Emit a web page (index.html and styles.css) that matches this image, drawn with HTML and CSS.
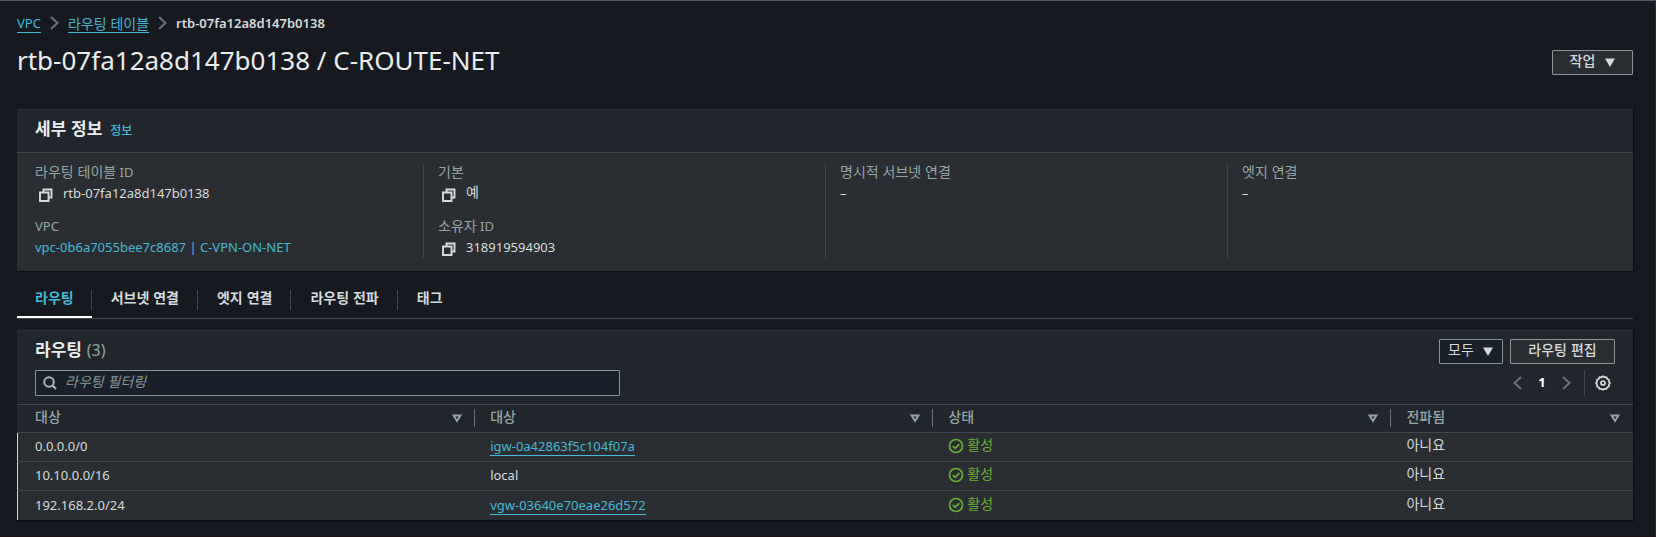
FILE: index.html
```html
<!DOCTYPE html>
<html lang="ko">
<head>
<meta charset="utf-8">
<meta name="viewport" content="width=device-width, initial-scale=1">
<title>rtb-07fa12a8d147b0138 / C-ROUTE-NET</title>
<link rel="stylesheet" href="styles.css">
</head>
<body>
<svg class="sprite" aria-hidden="true">
  <symbol id="chevron" viewBox="0 0 9 14"><path d="M1 1l6.500 6L1 13" fill="none" stroke="currentColor" stroke-width="2"/></symbol>
  <symbol id="caret" viewBox="0 0 10 9"><path d="M0 .5h10L5 9z" fill="currentColor"/></symbol>
  <symbol id="sort" viewBox="0 0 10 9"><path d="M1.600 1.500h6.800L5 7z" fill="none" stroke="currentColor" stroke-width="1.900"/></symbol>
  <symbol id="copy" viewBox="0 0 14 14"><path d="M1 4.500h8.500v8.500H1zM4.500 4.500V1.500H12.500v8H10" fill="none" stroke="currentColor" stroke-width="1.900"/></symbol>
  <symbol id="ok" viewBox="0 0 16 16"><circle cx="8" cy="8" r="6.500" fill="none" stroke="currentColor" stroke-width="1.700"/><path d="M4.800 8l2.300 2.300 4.200-4.200" fill="none" stroke="currentColor" stroke-width="1.700"/></symbol>
  <symbol id="search" viewBox="0 0 14 14"><circle cx="6" cy="6" r="4.800" fill="none" stroke="currentColor" stroke-width="2"/><path d="M9.500 9.500l3.500 3.500" stroke="currentColor" stroke-width="2"/></symbol>
  <symbol id="gear" viewBox="0 0 16 16"><path d="M8 1.200l1.600 1.100 1.900-.1.800 1.700 1.700.9-.1 1.900L15 8l-1.100 1.500.1 1.900-1.700.8-.8 1.700-1.900-.1L8 14.900l-1.600-1.100-1.900.1-.8-1.700-1.700-.8.1-1.900L1 8l1.100-1.400L2 4.800l1.700-.9.800-1.700 1.900.1z" fill="none" stroke="currentColor" stroke-width="1.700" stroke-linejoin="round"/><circle cx="8" cy="8" r="2" fill="none" stroke="currentColor" stroke-width="1.700"/></symbol>
</svg>
<div class="page">
  <nav class="crumbs" aria-label="breadcrumb">
    <a class="link line" href="#">VPC</a>
    <svg class="chev"><use href="#chevron"/></svg>
    <a class="link line ko" href="#">라우팅 테이블</a>
    <svg class="chev"><use href="#chevron"/></svg>
    <span class="current">rtb-07fa12a8d147b0138</span>
  </nav>
  <header class="title-row">
    <h1>rtb-07fa12a8d147b0138 / C-ROUTE-NET</h1>
    <button class="btn actions" type="button"><span>작업</span><svg class="caret"><use href="#caret"/></svg></button>
  </header>

  <section class="panel details">
    <div class="panel-head"><h2>세부 정보</h2><a class="link info" href="#">정보</a></div>
    <div class="columns">
      <dl>
        <dt><span class="ko">라우팅 테이블</span> ID</dt>
        <dd><button class="copy" type="button" aria-label="복사"><svg><use href="#copy"/></svg></button>rtb-07fa12a8d147b0138</dd>
        <dt>VPC</dt>
        <dd><a class="link" href="#">vpc-0b6a7055bee7c8687 | C-VPN-ON-NET</a></dd>
      </dl>
      <dl>
        <dt><span class="ko">기본</span></dt>
        <dd><button class="copy" type="button" aria-label="복사"><svg><use href="#copy"/></svg></button><span class="ko raised">예</span></dd>
        <dt><span class="ko">소유자</span> ID</dt>
        <dd><button class="copy" type="button" aria-label="복사"><svg><use href="#copy"/></svg></button>318919594903</dd>
      </dl>
      <dl>
        <dt><span class="ko">명시적 서브넷 연결</span></dt>
        <dd>–</dd>
      </dl>
      <dl>
        <dt><span class="ko">엣지 연결</span></dt>
        <dd>–</dd>
      </dl>
    </div>
  </section>

  <div class="tabs" role="tablist">
    <button class="tab active" type="button" role="tab" aria-selected="true">라우팅</button>
    <button class="tab" type="button" role="tab">서브넷 연결</button>
    <button class="tab" type="button" role="tab">엣지 연결</button>
    <button class="tab" type="button" role="tab">라우팅 전파</button>
    <button class="tab" type="button" role="tab">태그</button>
  </div>

  <section class="panel routes">
    <div class="tools">
      <h2>라우팅 <span class="count">(3)</span></h2>
      <div class="buttons">
        <div class="select">
          <select aria-label="라우팅 보기"><option>모두</option></select>
          <svg class="caret"><use href="#caret"/></svg>
        </div>
        <button class="btn edit" type="button"><span>라우팅 편집</span></button>
      </div>
    </div>
    <div class="filter">
      <label class="search"><svg><use href="#search"/></svg><input type="text" placeholder="라우팅 필터링" aria-label="라우팅 필터링"></label>
      <div class="pager">
        <button class="page-btn" type="button" aria-label="이전"><svg class="chev prev"><use href="#chevron"/></svg></button>
        <button class="page-no" type="button">1</button>
        <button class="page-btn" type="button" aria-label="다음"><svg class="chev"><use href="#chevron"/></svg></button>
        <button class="gear" type="button" aria-label="설정"><svg><use href="#gear"/></svg></button>
      </div>
    </div>
    <table>
      <colgroup><col class="wide"><col class="wide"><col class="wide"><col></colgroup>
      <thead>
        <tr>
          <th><div class="th"><span>대상</span><svg><use href="#sort"/></svg></div></th>
          <th><div class="th"><span>대상</span><svg><use href="#sort"/></svg></div></th>
          <th><div class="th"><span>상태</span><svg><use href="#sort"/></svg></div></th>
          <th><div class="th"><span>전파됨</span><svg><use href="#sort"/></svg></div></th>
        </tr>
      </thead>
      <tbody>
        <tr><td>0.0.0.0/0</td><td><a class="link line" href="#">igw-0a42863f5c104f07a</a></td><td><div class="status"><svg><use href="#ok"/></svg><span>활성</span></div></td><td><div class="ko raised">아니요</div></td></tr>
        <tr><td>10.10.0.0/16</td><td>local</td><td><div class="status"><svg><use href="#ok"/></svg><span>활성</span></div></td><td><div class="ko raised">아니요</div></td></tr>
        <tr><td>192.168.2.0/24</td><td><a class="link line" href="#">vgw-03640e70eae26d572</a></td><td><div class="status"><svg><use href="#ok"/></svg><span>활성</span></div></td><td><div class="ko raised">아니요</div></td></tr>
      </tbody>
    </table>
  </section>
</div>
</body>
</html>
```
FILE: styles.css
```css
* { box-sizing: border-box; }
body {
  margin: 0;
  min-height: 100vh;
  background: #16191f;
  color: #d5dbdb;
  font: 13px/20px "Noto Sans", "Noto Sans CJK KR", sans-serif;
  border-top: 1px solid #545b64;
  border-right: 1px solid #2a2e33;
  border-bottom: 1px solid #1d1319;
}
button, input, select { font: inherit; color: inherit; }
button { background: none; border: 0; padding: 0; margin: 0; }
h1, h2, dl, dd { margin: 0; }
.sprite { position: absolute; width: 0; height: 0; }
.page { padding: 12px 22px 0 17px; }
.ko { font-size: 14px; font-family: "Noto Sans CJK KR", sans-serif; }
.raised { padding-bottom: 4px; line-height: 16px; }
.link { color: #44b9d6; text-decoration: none; }
.line { border-bottom: 1px solid #44b9d6; line-height: 18px; display: inline-block; }

.crumbs { display: flex; align-items: center; height: 20px; }
.chev { width: 9px; height: 14px; margin: 0 9px; color: #687078; }
.current { font-weight: 600; }
.title-row { display: flex; justify-content: space-between; align-items: flex-start; padding-top: 9px; height: 76px; }
h1 { font-size: 26px; line-height: 36px; font-weight: 400; color: #eaeded; }
.btn {
  height: 25px;
  border: 1px solid #879596;
  border-radius: 1px;
  background: #2a2e33;
  font: 500 14px/18px "Noto Sans CJK KR", sans-serif;
  display: flex;
  align-items: center;
  justify-content: center;
}
.btn span { padding-bottom: 5px; }
.caret { width: 10px; height: 9px; }
.actions { width: 81px; gap: 10px; margin-top: 8px; }

.panel { background: #2a2e33; border-top: 1px solid #2d3136; box-shadow: 0 1px 1px #0a0c0f, 1px 1px 1px #0f1114; }
.panel-head { display: flex; align-items: flex-end; gap: 8px; height: 43px; padding: 0 18px 12px; background: #21252c; border-bottom: 1px solid #414750; }
h2 { font: 700 17px/24px "Noto Sans CJK KR", sans-serif; color: #eaeded; }
.info { font: 500 12px/20px "Noto Sans CJK KR", sans-serif; }
.columns { display: grid; grid-template-columns: repeat(4, 1fr); padding: 11px 4px 13px; }
dl { padding: 0 14px; height: 94px; border-left: 1px solid #414750; }
dl:first-child { border-left: 0; }
dt { color: #95a5a6; line-height: 16px; height: 18px; }
dt .ko { line-height: 12px; }
dd { height: 22px; line-height: 22px; display: flex; align-items: center; }
dd + dt { margin-top: 14px; }
.copy { display: flex; width: 28px; padding: 3px 0 0 4px; }
.copy svg { width: 14px; height: 14px; }

.tabs { display: flex; margin-top: 14px; height: 34px; border-bottom: 1px solid #414750; }
.tab { position: relative; padding: 0 19px 9px; font: 700 14px/20px "Noto Sans CJK KR", sans-serif; }
.tab:first-child { padding-left: 18px; padding-right: 18px; }
.tab:not(:last-child)::after { content: ""; position: absolute; right: 0; top: 5px; height: 20px; border-right: 1px solid #414750; }
.active { color: #44b9d6; box-shadow: inset 0 -2px #fff; }

.routes { margin-top: 11px; }
.tools { display: flex; justify-content: space-between; align-items: flex-start; height: 39px; padding: 6px 18px 0; background: #21252c; }
.count { font: 400 16px/24px "Noto Sans", sans-serif; color: #95a5a6; }
.buttons { display: flex; gap: 7px; padding-top: 2px; }
.edit { width: 105px; }
.select { position: relative; width: 64px; height: 25px; }
.select select { appearance: none; width: 100%; height: 100%; padding: 0 8px 5px; background: #1a2029; border: 1px solid #879596; border-radius: 1px; font: 400 14px/18px "Noto Sans CJK KR", sans-serif; }
.select .caret { position: absolute; right: 10px; top: 8px; pointer-events: none; }
.filter { display: flex; justify-content: space-between; padding: 0 18px 8px; background: #21252c; }
.search { display: flex; align-items: center; width: 37%; height: 26px; padding-left: 7px; gap: 8px; border: 1px solid #879596; border-radius: 1px; background: #1a2029; }
.search svg { width: 14px; height: 14px; color: #aab7b8; }
.search input { flex: 1; min-width: 0; padding: 0 0 4px; border: 0; outline: 0; background: none; font: 400 14px/20px "Noto Sans CJK KR", sans-serif; }
.search input::placeholder { color: #879596; font-style: italic; opacity: 1; }
.pager { display: flex; align-items: center; height: 26px; }
.page-btn { display: flex; }
.page-btn .chev { margin: 0; }
.prev { transform: rotate(180deg); }
.page-no { width: 40px; padding-bottom: 2px; font-weight: 700; color: #fff; }
.gear { display: flex; align-items: center; height: 26px; margin-left: 13px; padding: 0 4px 0 10px; border-left: 1px solid #414750; }
.gear svg { width: 16px; height: 16px; }

table { width: 100%; table-layout: fixed; border-collapse: separate; border-spacing: 0; }
.wide { width: 28.35%; }
th { height: 29px; padding: 4px 0 5px; background: #21252c; border-top: 1px solid #414750; border-bottom: 1px solid #414750; text-align: left; }
.th { display: flex; justify-content: space-between; align-items: center; height: 18px; padding: 0 12px 0 15px; border-right: 1px solid #687078; color: #95a5a6; font: 500 14px/16px "Noto Sans CJK KR", sans-serif; }
.th span { padding-bottom: 4px; }
.th svg { width: 10px; height: 9px; }
th:first-child .th { padding-left: 18px; }
th:last-child .th { border-right: 0; padding-right: 13px; }
td { height: 29px; padding: 0 14px 2px 15px; border-bottom: 1px solid #414750; line-height: 20px; vertical-align: middle; }
td:first-child { padding-left: 17px; border-left: 1px solid #d5dbdb; }
tbody tr:last-child td { border-bottom: 0; }
.status { display: flex; align-items: center; gap: 3px; height: 20px; color: #6aaf35; font: 400 14px/16px "Noto Sans CJK KR", sans-serif; }
.status span { padding-bottom: 4px; }
.status svg { width: 16px; height: 16px; }
```
